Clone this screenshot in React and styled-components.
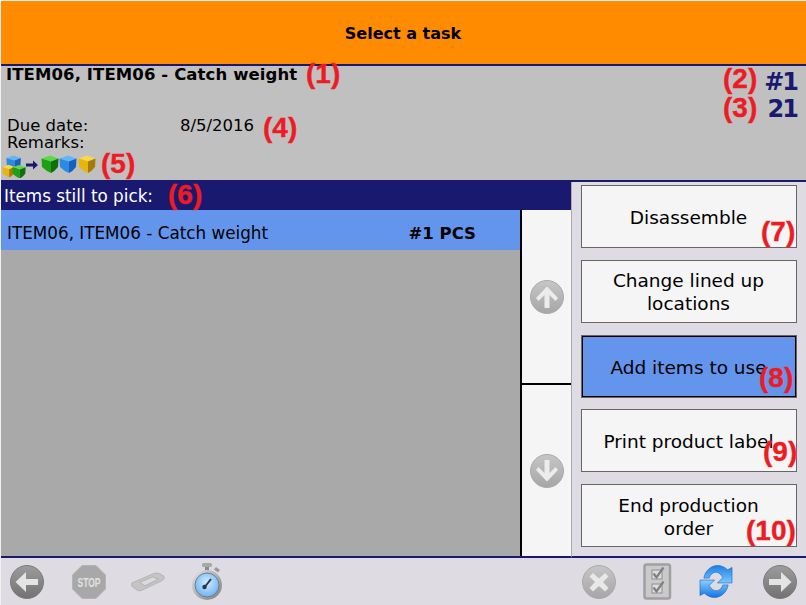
import React from "react";
import styled, { createGlobalStyle } from "styled-components";

const Global = createGlobalStyle`
  html, body { margin: 0; padding: 0; background: #f0f0f0; }
  body { font-family: "DejaVu Sans", Verdana, sans-serif; color: #000; }
`;

const navy = "#191970";

const Screen = styled.div`
  position: relative;
  width: 805px;
  height: 604px;
  padding: 1px 0 0 1px;
  display: flex;
  flex-direction: column;
  overflow: hidden;
`;
const Header = styled.header`
  height: 63px;
  flex: none;
  background: #ff8c00;
  border-bottom: 2px solid ${navy};
  display: flex;
  align-items: center;
  justify-content: center;
  font-size: 16px;
  font-weight: 700;
  padding-right: 1px;
  box-sizing: content-box;
`;
const HeaderText = styled.span`
  position: relative;
  top: 1px;
`;
const Info = styled.section`
  height: 114px;
  flex: none;
  background: #c0c0c0;
  border-bottom: 2px solid ${navy};
  padding: 0 7px 0 0;
  display: grid;
  grid-template-columns: 1fr auto;
`;
const InfoLeft = styled.div`
  display: flex;
  flex-direction: column;
  min-width: 0;
`;
const ItemTitle = styled.div`
  font-size: 16.500px;
  font-weight: 700;
  line-height: 17px;
  letter-spacing: 0.1px;
  padding: 0 0 0 5px;
  height: 51px;
`;
const InfoRow = styled.div`
  display: grid;
  grid-template-columns: 173px auto;
  line-height: 17px;
  padding-left: 6px;
  font-size: 16.500px;
`;
const CubeRow = styled.div`
  display: flex;
  align-items: flex-start;
  height: 24px;
  margin-top: 3px;
`;
const InfoRight = styled.div`
  display: flex;
  flex-direction: column;
  align-items: flex-end;
  color: ${navy};
  font-weight: 700;
  font-size: 24px;
  letter-spacing: -2px;
  line-height: 27px;
  padding: 3px 2px 0 0;
`;
const Main = styled.main`
  flex: 1;
  display: grid;
  grid-template-columns: 570px 1fr;
  min-height: 0;
`;
const ListSide = styled.div`
  display: flex;
  flex-direction: column;
  min-height: 0;
`;
const ListCaption = styled.div`
  height: 28px;
  flex: none;
  background: ${navy};
  color: #fff;
  font-size: 16.800px;
  display: flex;
  align-items: center;
  padding-left: 3px;
`;
const ListBody = styled.div`
  flex: 1;
  display: grid;
  grid-template-columns: 521px 1fr;
  min-height: 0;
  border-bottom: 2px solid ${navy};
`;
const List = styled.div`
  background: #a9a9a9;
  border-right: 2px solid #000;
  box-sizing: border-box;
`;
const ListRow = styled.div`
  height: 40px;
  box-sizing: border-box;
  background: #6495ed;
  display: flex;
  align-items: center;
  justify-content: space-between;
  font-size: 16.800px;
  padding: 6px 44px 0 6px;
`;
const Qty = styled.span`
  font-weight: 700;
  font-size: 16.500px;
`;
const Scroller = styled.div`
  display: grid;
  grid-template-rows: 1fr 1fr;
  background: #f5f5f5;
  min-height: 0;
`;
const ScrollCell = styled.div`
  display: flex;
  justify-content: center;
  align-items: flex-start;
  padding: ${(p) => p.$pad};
  & + & { border-top: 2px solid #000; }
`;
const Actions = styled.aside`
  background: #dedce2;
  border-left: 1px solid #aaa;
  padding: 3px 9px 9px 9px;
  display: flex;
  flex-direction: column;
  justify-content: space-between;
  border-bottom: 2px solid ${navy};
`;
const ActionBtn = styled.button`
  height: 63px;
  box-sizing: border-box;
  font-family: inherit;
  font-size: 18.500px;
  line-height: 23px;
  color: #000;
  padding: 2px 19px 0 18px;
  background: ${(p) => (p.$active ? "#6495ed" : "#f5f5f5")};
  border: ${(p) => (p.$active ? "2px solid #000" : "1px solid #666")};
  outline: ${(p) => (p.$active ? "1px solid #666" : "none")};
  outline-offset: -1px;
`;
const Footer = styled.footer`
  height: 47px;
  flex: none;
  background: #dedce2;
  display: flex;
  align-items: center;
  padding: 0 9px 0 9px;
`;
const FootIcon = styled.div`
  width: 34px;
  height: 38px;
  display: flex;
  align-items: center;
  justify-content: center;
  margin-left: ${(p) => p.$gap || 0}px;
  &.push { margin-left: auto; }
`;
const Note = styled.span`
  position: absolute;
  left: ${(p) => p.$x}px;
  top: ${(p) => p.$y}px;
  font-family: "Liberation Sans", Arial, sans-serif;
  font-weight: 700;
  font-size: 28px;
  line-height: 28px;
  color: #ed1c24;
  -webkit-text-stroke: 0.4px #ed1c24;
`;

const Circle = ({ dark, children, size = 34 }) => (
  <svg width={size} height={size} viewBox="0 0 34 34">
    <defs>
      <linearGradient id={dark ? "cd" : "cl"} x1="0" y1="0" x2="0" y2="1">
        <stop offset="0" stopColor={dark ? "#9c9c9c" : "#c6c6c6"} />
        <stop offset="1" stopColor={dark ? "#727272" : "#a6a6a6"} />
      </linearGradient>
    </defs>
    <circle cx="17" cy="17" r="16.500" fill={`url(#${dark ? "cd" : "cl"})`} stroke={dark ? "#7c7c7c" : "#aaa"} />
    {children}
  </svg>
);
const ArrowH = ({ right }) => (
  <Circle dark>
    <path
      d={right ? "M6 14h12V7l10.500 10L18 27v-7H6z" : "M28 14H16V7L5.500 17 16 27v-7h12z"}
      fill="#e4e4e4"
    />
  </Circle>
);
const ArrowV = ({ down }) => (
  <Circle>
    <path
      d={down ? "M14.500 6h5v13l6-6 2.500 3L17 27.500 6 16l2.500-3 6 6z" : "M14.500 28h5V15l6 6 2.500-3L17 6.500 6 18l2.500 3 6-6z"}
      fill="#ececec"
    />
  </Circle>
);
const Stop = () => (
  <svg width="34" height="34" viewBox="0 0 34 34">
    <path d="M10 .5h14L33.500 10v14L24 33.500H10L.5 24V10z" fill="#a8a8a8" stroke="#b4b4b4" />
    <text x="5.500" y="21.500" textLength="23" lengthAdjust="spacingAndGlyphs" fontFamily="Liberation Sans" fontWeight="700" fontSize="12.500" fill="#e2e2e2">STOP</text>
  </svg>
);
const Scanner = () => (
  <svg width="36" height="20" viewBox="0 0 36 20">
    <path d="M1 11 L24 1 Q27 0 30 1 L35 4 Q36 7 33 8.500 L12 18.500 Q9 20 7 19 L1 14.500 Q0 12.500 1 11z" fill="#c4c4c4" stroke="#b2b2b2" />
    <path d="M9 10.500 L23 4.500 L29 7 L15 14z" fill="#dadada" stroke="#b0b0b0" />
  </svg>
);
const Watch = () => (
  <svg width="32" height="37" viewBox="0 0 32 37">
    <defs>
      <radialGradient id="face" cx="0.5" cy="0.4" r="0.6">
        <stop offset="0" stopColor="#d4ecff" />
        <stop offset="1" stopColor="#6fb2f0" />
      </radialGradient>
      <linearGradient id="case" x1="0" y1="0" x2="1" y2="1">
        <stop offset="0" stopColor="#e4e4e4" />
        <stop offset="1" stopColor="#7c7c7c" />
      </linearGradient>
    </defs>
    <rect x="11" y="0" width="10" height="4" rx="1.500" fill="#a8a8a8" />
    <rect x="14" y="4" width="4" height="4" fill="#8c8c8c" />
    <path d="M25 4l4 3-2 2.500-4-3z" fill="#999" />
    <circle cx="16" cy="22" r="15" fill="url(#case)" />
    <circle cx="16" cy="22" r="12" fill="url(#face)" stroke="#6a7f94" />
    <path d="M13 25l7-9" stroke="#25384c" strokeWidth="2" />
    <circle cx="13.500" cy="24" r="2.200" fill="#25384c" />
  </svg>
);
const XIcon = () => (
  <Circle>
    <path d="M11 8l6 5.500L23 8l3.500 3.500-5.500 5.500 5.500 6-3.500 3.500-6-5.500-6 5.500L7.500 23l5.500-6-5.500-5.500z" fill="#e8e8e8" />
  </Circle>
);
const Checklist = () => (
  <svg width="30" height="37" viewBox="0 0 30 37">
    <rect x="1.500" y="1.500" width="25.500" height="34" rx="2" fill="#cacaca" stroke="#a0a0a0" strokeWidth="2.500" />
    <rect x="9" y="7" width="10" height="9" fill="#dcdcdc" stroke="#8e8e8e" />
    <rect x="9" y="21" width="10" height="9" fill="#dcdcdc" stroke="#8e8e8e" />
    <path d="M10.500 10.500l3 4 7-10M10.500 24.500l3 4 7-10" fill="none" stroke="#808080" strokeWidth="2.200" />
  </svg>
);
const refreshArc = "M5 14 C6 7 12 1 19 1 C23 1 27 3 29.500 5.500 L34 3 V19 H19 L24.500 13.500 C22.500 10 20 8 17.500 8 C14 8 11.500 10.500 10.500 14 Z";
const Refresh = () => (
  <svg width="35" height="35" viewBox="0 0 35 35">
    <defs>
      <linearGradient id="rf1" x1="0" y1="0" x2="0" y2="1">
        <stop offset="0" stopColor="#1b7fe8" />
        <stop offset="1" stopColor="#7cc6ff" />
      </linearGradient>
      <linearGradient id="rf2" x1="0" y1="1" x2="0" y2="0">
        <stop offset="0" stopColor="#8cd0ff" />
        <stop offset="1" stopColor="#1273e0" />
      </linearGradient>
    </defs>
    <path d={refreshArc} fill="url(#rf1)" stroke="#0d62c4" strokeWidth=".6" />
    <path d={refreshArc} transform="rotate(180 17.500 17.500)" fill="url(#rf2)" stroke="#0d62c4" strokeWidth=".6" />
  </svg>
);
const Cube = ({ x = 0, y = 0, c, s = 1 }) => (
  <g transform={`translate(${x} ${y}) scale(${s})`}>
    <path d="M.5 3.500L9 .5 17.500 3.500 10 6.500z" fill={c[0]} />
    <path d="M.5 3.500L10 6.500V18Q5 16 1 12z" fill={c[1]} />
    <path d="M10 6.500L17.500 3.500 17 12Q14 16 10 18z" fill={c[2]} />
  </g>
);
const green = ["#5ed848", "#1ea014", "#0f6f0c"];
const blue = ["#62b6f8", "#2a8ae6", "#1760bc"];
const yellow = ["#f8d848", "#e8b410", "#a87a08"];
const CubeStrip = () => (
  <svg width="96" height="24" viewBox="0 0 96 24">
    <Cube x={5} y={1} s={0.85} c={blue} />
    <Cube x={1} y={10.500} s={0.72} c={yellow} />
    <Cube x={11} y={10.500} s={0.78} c={green} />
    <path d="M25 9.500h7V6.500l5 4.500-5 4.500v-3h-7z" fill={navy} />
    <Cube x={40} y={1} c={green} />
    <Cube x={58} y={1} c={blue} />
    <Cube x={77} y={1} c={yellow} />
  </svg>
);

const notes = [
  ["(1)", 306, 60], ["(2)", 723, 65], ["(3)", 723, 94], ["(4)", 263, 114], ["(5)", 101, 150],
  ["(6)", 168, 181], ["(7)", 761, 218], ["(8)", 759, 364], ["(9)", 763, 438], ["(10)", 746, 517],
];

export default function App() {
  return (
    <Screen>
      <Global />
      <Header><HeaderText>Select a task</HeaderText></Header>
      <Info>
        <InfoLeft>
          <ItemTitle>ITEM06, ITEM06 - Catch weight</ItemTitle>
          <InfoRow><span>Due date:</span><span>8/5/2016</span></InfoRow>
          <InfoRow><span>Remarks:</span></InfoRow>
          <CubeRow><CubeStrip /></CubeRow>
        </InfoLeft>
        <InfoRight><span>#1</span><span>21</span></InfoRight>
      </Info>
      <Main>
        <ListSide>
          <ListCaption>Items still to pick:</ListCaption>
          <ListBody>
            <List>
              <ListRow><span>ITEM06, ITEM06 - Catch weight</span><Qty>#1 PCS</Qty></ListRow>
            </List>
            <Scroller>
              <ScrollCell $pad="70px 0 0"><ArrowV /></ScrollCell>
              <ScrollCell $pad="69px 0 0"><ArrowV down /></ScrollCell>
            </Scroller>
          </ListBody>
        </ListSide>
        <Actions>
          <ActionBtn>Disassemble</ActionBtn>
          <ActionBtn>Change lined up locations</ActionBtn>
          <ActionBtn $active>Add items to use</ActionBtn>
          <ActionBtn>Print product label</ActionBtn>
          <ActionBtn>End production order</ActionBtn>
        </Actions>
      </Main>
      <Footer>
        <FootIcon><ArrowH /></FootIcon>
        <FootIcon $gap={28}><Stop /></FootIcon>
        <FootIcon $gap={25}><Scanner /></FootIcon>
        <FootIcon $gap={25}><Watch /></FootIcon>
        <FootIcon className="push"><XIcon /></FootIcon>
        <FootIcon $gap={25}><Checklist /></FootIcon>
        <FootIcon $gap={24}><Refresh /></FootIcon>
        <FootIcon $gap={30}><ArrowH right /></FootIcon>
      </Footer>
      {notes.map(([t, x, y]) => <Note key={t} $x={x} $y={y}>{t}</Note>)}
    </Screen>
  );
}
